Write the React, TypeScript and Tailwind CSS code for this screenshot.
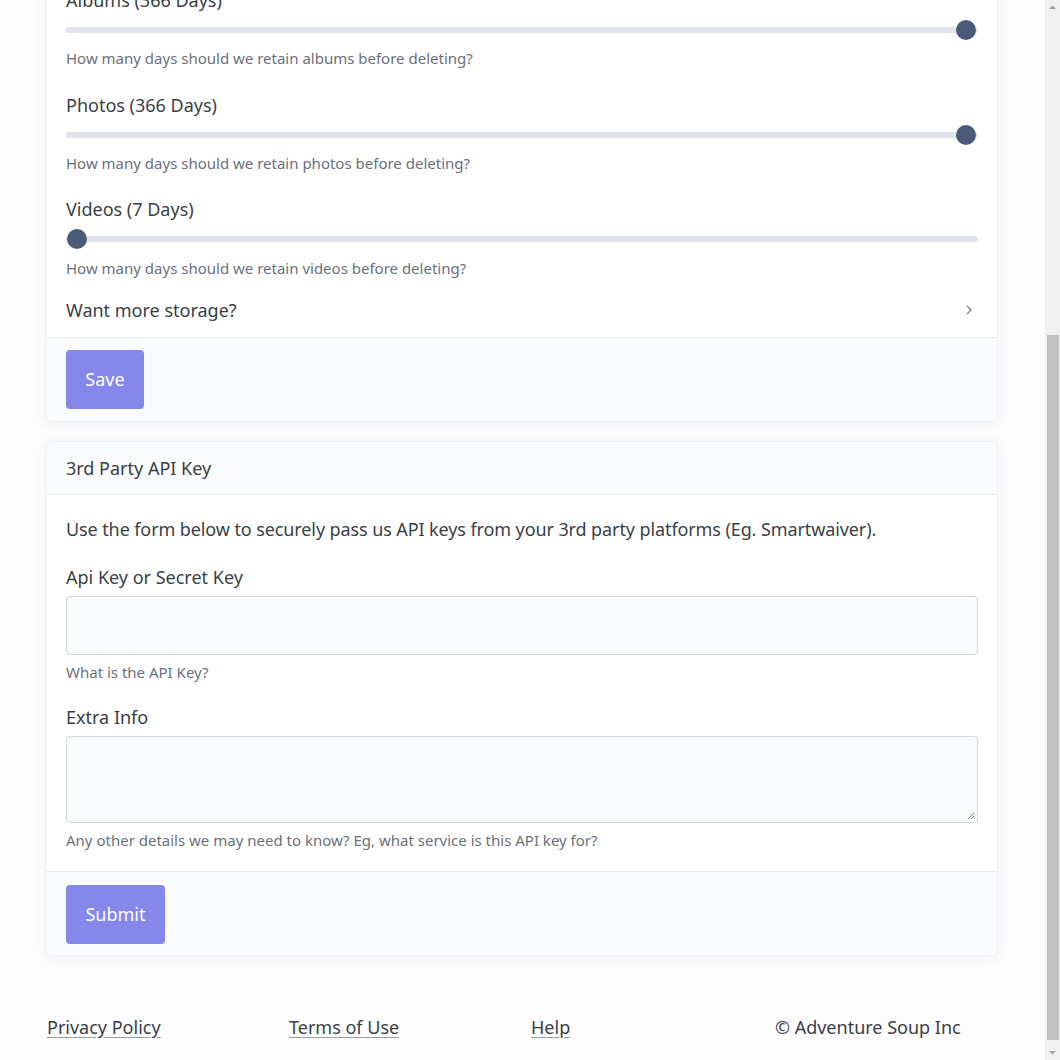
import React from "react";

const font = { fontFamily: '"Noto Sans", "Open Sans", sans-serif' };

function Slider({
  label,
  help,
  pct,
  pb = "pb-[22px]",
  hm = "mt-[7px]",
}: {
  label: string;
  help: string;
  pct: number;
  pb?: string;
  hm?: string;
}) {
  return (
    <div className={pb}>
      <div className="h-[27px] text-[18px] leading-[27px] text-[#3a3f47]">{label}</div>
      <div className="relative mt-[6px] h-[20px]">
        <div className="absolute left-0 right-0 top-[7px] h-[6px] rounded-full bg-[#e1e4eb]" />
        <div
          className="absolute top-0 h-[20px] w-[20px] rounded-full bg-[#4c5a7a]"
          style={{ left: `calc(${pct}% - ${pct === 0 ? -1 : 22}px)` }}
        />
      </div>
      <div className={`${hm} h-[22px] text-[15px] leading-[22px] text-[#6b717c]`}>{help}</div>
    </div>
  );
}

export default function App() {
  return (
    <div className="flex h-[1060px] w-[1060px] overflow-hidden bg-[#fdfdfe]" style={font}>
      <div className="flex-1 overflow-hidden">
        <div className="-mt-[13px] px-[46px] pr-[47px]">
          {/* Card 1 */}
          <div className="overflow-hidden rounded-b-md border border-t-0 border-[#eef0f4] bg-white shadow-[0_2px_14px_rgba(30,40,80,0.06)]">
            <div className="px-[19px]">
              <Slider
                label="Albums (366 Days)"
                help="How many days should we retain albums before deleting?"
                pct={100}
                pb="pb-[23px]"
              />
              <Slider label="Photos (366 Days)" help="How many days should we retain photos before deleting?" pct={100} />
              <div className="-mb-[5px]">
                <Slider
                  label="Videos (7 Days)"
                  help="How many days should we retain videos before deleting?"
                  pct={0}
                  hm="mt-[8px]"
                />
              </div>
              <div className="flex h-[28px] items-center justify-between text-[18px] text-[#3a3f47]">
                <span>Want more storage?</span>
                <svg width="12" height="12" viewBox="0 0 12 12" className="mr-[3px]">
                  <path d="M4 2 L8 6 L4 10" fill="none" stroke="#7d838d" strokeWidth="1.4" />
                </svg>
              </div>
              <div className="h-[13px]" />
            </div>
            <div className="border-t border-[#e8eaee] bg-[#fafbfc] px-[19px] py-[12px]">
              <button className="h-[59px] w-[78px] rounded-[4px] bg-[#8587ea] text-[18px] text-white">Save</button>
            </div>
          </div>

          {/* Card 2 */}
          <div className="mt-[19px] overflow-hidden rounded-md border border-[#eef0f4] bg-white shadow-[0_2px_14px_rgba(30,40,80,0.06)]">
            <div className="flex h-[53px] items-center border-b border-[#e8eaee] bg-[#fafbfc] px-[19px] text-[18px] text-[#3a3f47]">
              3rd Party API Key
            </div>
            <div className="px-[19px] pb-[20px] pt-[21px]">
              <p className="text-[18px] leading-[27px] tracking-[-0.1px] text-[#3a3f47]">
                Use the form below to securely pass us API keys from your 3rd party platforms (Eg. Smartwaiver).
              </p>
              <div className="mt-[21px] text-[18px] leading-[27px] text-[#3a3f47]">Api Key or Secret Key</div>
              <div className="mt-[5px] h-[59px] rounded-[4px] border border-[#d4d7dc] bg-[#fafbfc]" />
              <div className="mt-[6px] text-[15px] leading-[22px] text-[#6b717c]">What is the API Key?</div>
              <div className="mt-[21px] text-[18px] leading-[27px] text-[#3a3f47]">Extra Info</div>
              <div className="relative mt-[5px] h-[87px] rounded-[4px] border border-[#d4d7dc] bg-[#fafbfc]">
                <svg width="10" height="10" viewBox="0 0 10 10" className="absolute bottom-[2px] right-[2px]">
                  <path d="M9 3 L3 9 M9 6 L6 9" stroke="#777" strokeWidth="1" />
                </svg>
              </div>
              <div className="mt-[6px] text-[15px] leading-[22px] text-[#6b717c]">
                Any other details we may need to know? Eg, what service is this API key for?
              </div>
            </div>
            <div className="border-t border-[#e8eaee] bg-[#fafbfc] px-[19px] pb-[11px] pt-[13px]">
              <button className="h-[59px] w-[99px] rounded-[4px] bg-[#8587ea] text-[18px] text-white">Submit</button>
            </div>
          </div>

          {/* Footer */}
          <div className="mt-[58px] grid grid-cols-[242px_242px_244px_auto] pl-[1px] text-[18px] leading-[27px] text-[#3a3f47]">
            <a className="w-fit underline underline-offset-[3px] decoration-[#9aa0a8]" href="#">Privacy Policy</a>
            <a className="w-fit underline underline-offset-[3px] decoration-[#9aa0a8]" href="#">Terms of Use</a>
            <a className="w-fit underline underline-offset-[3px] decoration-[#9aa0a8]" href="#">Help</a>
            <span>© Adventure Soup Inc</span>
          </div>
        </div>
      </div>
      {/* Scrollbar */}
      <div className="relative w-[15px] shrink-0 bg-[#f0f0f0]">
        <div className="absolute left-[2px] top-[335px] h-[705px] w-[12px] bg-[#c1c1c1]" />
        <svg width="15" height="15" className="absolute left-0 top-0" viewBox="0 0 15 15">
          <path d="M4 9 L7.5 5.5 L11 9 Z" fill="#a3a3a3" />
        </svg>
        <svg width="15" height="15" className="absolute bottom-0 left-0" viewBox="0 0 15 15">
          <path d="M4 6 L7.5 9.5 L11 6 Z" fill="#a3a3a3" />
        </svg>
      </div>
    </div>
  );
}
